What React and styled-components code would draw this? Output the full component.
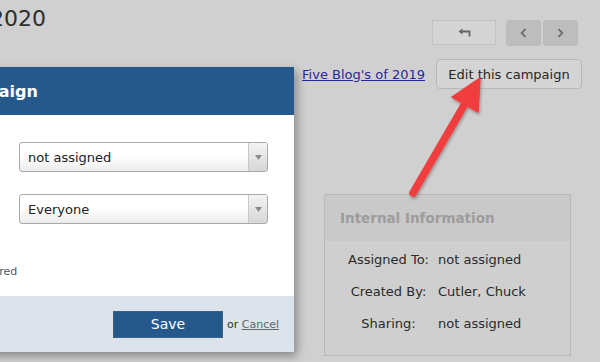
import styled, { createGlobalStyle } from "styled-components";

const GlobalStyle = createGlobalStyle`
  html, body {
    margin: 0;
    padding: 0;
    background: #d0d0d0;
    overflow: hidden;
  }
  body {
    font-family: "DejaVu Sans", Verdana, sans-serif;
    color: #333;
  }
`;

function BackIcon() {
  return (
    <svg width="13" height="9" viewBox="0 0 13 9">
      <path d="M3 3.5 H11.5 V8.5" fill="none" stroke="#666" strokeWidth="1.8" />
      <path d="M0.5 3.5 L4.5 0.5 L4.5 6.5 Z" fill="#666" />
    </svg>
  );
}

function Chevron({ dir }) {
  return (
    <svg width="7" height="10" viewBox="0 0 7 10">
      <path
        d={dir === "left" ? "M5.5 1 L1.8 5 L5.5 9" : "M1.5 1 L5.2 5 L1.5 9"}
        fill="none"
        stroke="#666"
        strokeWidth="1.7"
      />
    </svg>
  );
}

function Select({ value }) {
  return (
    <SelectBox>
      <SelectValue>{value}</SelectValue>
      <SelectArrow>
        <svg width="7" height="5" viewBox="0 0 7 5">
          <path d="M0 0 H7 L3.5 5 Z" fill="#8a8a8a" />
        </svg>
      </SelectArrow>
    </SelectBox>
  );
}

function PointerArrow() {
  return (
    <ArrowSvg width="100" height="140" viewBox="0 0 100 140">
      <defs>
        <filter id="arrowShadow" x="-30%" y="-30%" width="160%" height="160%">
          <feDropShadow dx="1" dy="2" stdDeviation="1.5" floodColor="#000" floodOpacity="0.3" />
        </filter>
      </defs>
      <g filter="url(#arrowShadow)">
        <line x1="13" y1="123" x2="66" y2="32" stroke="#f03d3d" strokeWidth="7.5" strokeLinecap="round" />
        <polygon points="80,8 78,42 52,27" fill="#f03d3d" strokeLinejoin="round" stroke="#f03d3d" strokeWidth="1.5" />
      </g>
    </ArrowSvg>
  );
}

const info = [
  { label: "Assigned To:", value: "not assigned" },
  { label: "Created By:", value: "Cutler, Chuck" },
  { label: "Sharing:", value: "not assigned" },
];

export default function App() {
  return (
    <>
      <GlobalStyle />
      <Canvas>
        <TopBar>
          <TitleBox>
            <Title>Campaign Report 2020</Title>
          </TitleBox>
          <Nav>
            <NavButton $wide>
              <BackIcon />
            </NavButton>
            <Pager>
              <NavButton $dark>
                <Chevron dir="left" />
              </NavButton>
              <NavButton $dark>
                <Chevron dir="right" />
              </NavButton>
            </Pager>
          </Nav>
        </TopBar>

        <ActionRow>
          <BlogLink href="#">Five Blog's of 2019</BlogLink>
          <EditButton>Edit this campaign</EditButton>
        </ActionRow>

        <ContentRow>
          <Panel>
            <PanelHead>Internal Information</PanelHead>
            <PanelBody>
              {info.map((row) => (
                <InfoRow key={row.label}>
                  <InfoLabel>{row.label}</InfoLabel>
                  <InfoValue>{row.value}</InfoValue>
                </InfoRow>
              ))}
            </PanelBody>
          </Panel>
        </ContentRow>

        <PointerArrow />

        <Modal>
          <ModalHead>Edit Campaign</ModalHead>
          <ModalBody>
            <Field>
              <FieldLabel>Assigned To</FieldLabel>
              <Select value="not assigned" />
            </Field>
            <Field>
              <FieldLabel>Sharing</FieldLabel>
              <Select value="Everyone" />
            </Field>
            <Note>* fields are required</Note>
          </ModalBody>
          <ModalFoot>
            <SaveButton>Save</SaveButton>
            <Or>
              or <CancelLink href="#">Cancel</CancelLink>
            </Or>
          </ModalFoot>
        </Modal>
      </Canvas>
    </>
  );
}

const Canvas = styled.div`
  position: relative;
  width: 760px;
  height: 362px;
  margin-left: -160px;
  padding-right: 18px;
  box-sizing: border-box;
  background: #d0d0d0;
  overflow: hidden;
`;

const TopBar = styled.div`
  display: flex;
  justify-content: space-between;
  align-items: flex-start;
`;

const TitleBox = styled.div`
  display: flex;
  justify-content: flex-end;
  width: 206px;
  padding-top: 6px;
`;

const Title = styled.h1`
  flex-shrink: 0;
  margin: 0;
  white-space: nowrap;
  font-size: 22px;
  font-weight: normal;
  color: #2e2e2e;
`;

const Nav = styled.div`
  display: flex;
  gap: 10px;
  margin-top: 20px;
  margin-right: 4px;
`;

const Pager = styled.div`
  display: flex;
  gap: 2px;
`;

const NavButton = styled.button`
  display: flex;
  align-items: center;
  justify-content: center;
  width: ${(p) => (p.$wide ? "64px" : "35px")};
  height: ${(p) => (p.$wide ? "25px" : "26px")};
  padding: 0;
  border: 1px solid ${(p) => (p.$dark ? "#bcbcbc" : "#c2c2c2")};
  border-radius: ${(p) => (p.$dark ? "3px" : "1px")};
  background: ${(p) => (p.$dark ? "#bdbdbd" : "#d5d5d5")};
`;

const ActionRow = styled.div`
  display: flex;
  justify-content: flex-end;
  align-items: center;
  gap: 11px;
  margin-top: 13px;
`;

const BlogLink = styled.a`
  font-size: 13px;
  color: #29289a;
  text-decoration: underline;
`;

const EditButton = styled.button`
  width: 146px;
  height: 30px;
  padding: 0;
  font-family: "DejaVu Sans", Verdana, sans-serif;
  font-size: 13px;
  color: #262626;
  background: #d4d4d4;
  border: 1px solid #b7b7b7;
  border-radius: 4px;
`;

const ContentRow = styled.div`
  display: flex;
  justify-content: flex-end;
  margin-top: 105px;
  padding-right: 11px;
`;

const Panel = styled.section`
  width: 247px;
  height: 162px;
  box-sizing: border-box;
  border: 1px solid #b8b8b8;
  background: #cfcfcf;
`;

const PanelHead = styled.div`
  height: 46px;
  display: flex;
  align-items: center;
  padding-left: 15px;
  background: #c9c9c9;
  font-size: 13.5px;
  font-weight: bold;
  color: #9c9c9c;
`;

const PanelBody = styled.div`
  padding-top: 2px;
`;

const InfoRow = styled.div`
  display: grid;
  grid-template-columns: 97px 1fr;
  align-items: center;
  height: 32px;
  padding-left: 15px;
  font-size: 13px;
  color: #2a2a2a;
`;

const InfoLabel = styled.span`
  text-align: center;
`;

const InfoValue = styled.span`
  padding-left: 1px;
`;

const ArrowSvg = styled.svg`
  position: absolute;
  left: 560px;
  top: 70px;
  overflow: visible;
`;

const Modal = styled.div`
  position: absolute;
  left: 40px;
  top: 67px;
  width: 414px;
  background: #fff;
  box-shadow: 3px 4px 9px rgba(0, 0, 0, 0.35);
`;

const ModalHead = styled.div`
  height: 48px;
  display: flex;
  align-items: center;
  padding-left: 27px;
  background: #25588b;
  color: #fff;
  font-size: 16px;
  font-weight: bold;
`;

const ModalBody = styled.div`
  display: flex;
  flex-direction: column;
  gap: 22px;
  padding: 27px 26px 16px 16px;
`;

const Field = styled.div`
  display: grid;
  grid-template-columns: 123px 1fr;
  align-items: center;
`;

const FieldLabel = styled.span`
  font-size: 13px;
  color: #333;
`;

const SelectBox = styled.div`
  display: flex;
  height: 30px;
  box-sizing: border-box;
  border: 1px solid #a9a9a9;
  border-radius: 3px;
  background: linear-gradient(#ffffff 45%, #ececec);
  overflow: hidden;
`;

const SelectValue = styled.span`
  flex: 1;
  display: flex;
  align-items: center;
  padding-left: 8px;
  font-size: 13px;
  color: #222;
`;

const SelectArrow = styled.span`
  width: 18px;
  display: flex;
  align-items: center;
  justify-content: center;
  border-left: 1px solid #c8c8c8;
  background: linear-gradient(#f4f4f4, #d6d6d6);
`;

const Note = styled.p`
  margin: 18px 0 0 12px;
  font-size: 11px;
  line-height: 16px;
  color: #555;
`;

const ModalFoot = styled.div`
  height: 56px;
  display: flex;
  justify-content: flex-end;
  align-items: center;
  gap: 4px;
  padding-right: 15px;
  background: #dce3ea;
`;

const SaveButton = styled.button`
  width: 110px;
  height: 27px;
  padding: 0;
  font-family: "DejaVu Sans", Verdana, sans-serif;
  font-size: 14px;
  color: #fff;
  background: #25588b;
  border: 1px solid #3f5f80;
`;

const Or = styled.span`
  font-size: 11px;
  color: #333;
`;

const CancelLink = styled.a`
  color: #666;
  text-decoration: underline;
`;
